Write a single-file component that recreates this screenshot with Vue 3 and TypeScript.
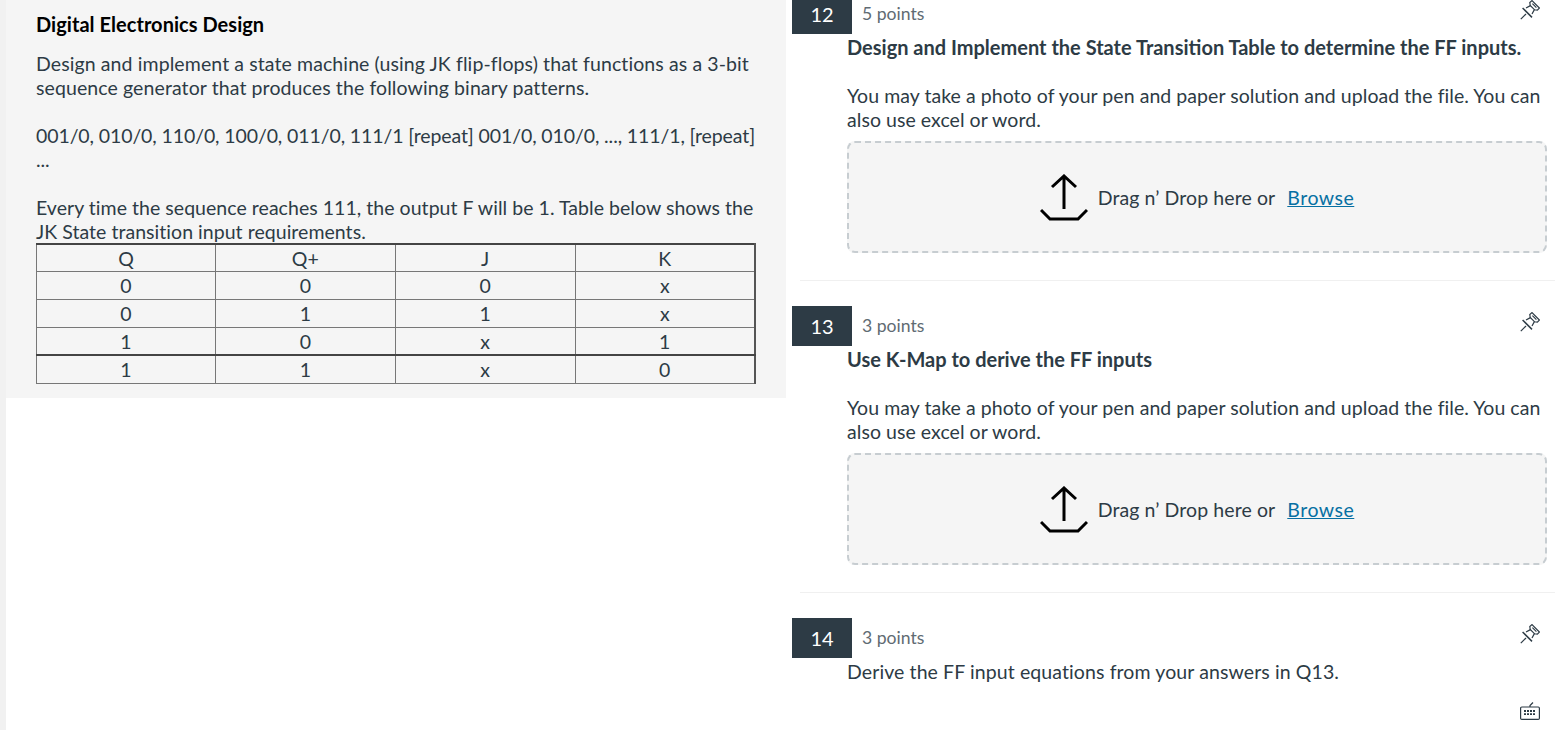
<script setup lang="ts">
interface Question {
  num: number;
  points: string;
  title: string;
  upload: boolean;
}

const rows: string[][] = [
  ['Q', 'Q+', 'J', 'K'],
  ['0', '0', '0', 'x'],
  ['0', '1', '1', 'x'],
  ['1', '0', 'x', '1'],
  ['1', '1', 'x', '0'],
];

const questions: Question[] = [
  { num: 12, points: '5 points', title: 'Design and Implement the State Transition Table to determine the FF inputs.', upload: true },
  { num: 13, points: '3 points', title: 'Use K-Map to derive the FF inputs', upload: true },
  { num: 14, points: '3 points', title: 'Derive the FF input equations from your answers in Q13.', upload: false },
];
</script>

<template>
  <div class="page">
    <div class="left">
      <div class="panel">
        <h2 class="heading">Digital Electronics Design</h2>
        <p class="line-block">Design and implement a state machine (using JK flip-flops) that functions as a 3-bit sequence generator that produces the following binary patterns.</p>
        <p class="line-block digits">001/0, 010/0, 110/0, 100/0, 011/0, 111/1 [repeat] 001/0, 010/0, ..., 111/1, [repeat] ...</p>
        <p class="line-block last">Every time the sequence reaches 111, the output F will be 1. Table below shows the JK State transition input requirements.</p>
        <table class="jk">
          <tbody>
            <tr v-for="(row, i) in rows" :key="i">
              <td v-for="(cell, j) in row" :key="j">{{ cell }}</td>
            </tr>
          </tbody>
        </table>
      </div>
    </div>

    <div class="right">
      <section v-for="q in questions" :key="q.num" class="question">
        <div class="q-head">
          <div class="q-num">{{ q.num }}</div>
          <div class="q-points">{{ q.points }}</div>
          <svg class="pin" viewBox="0 0 20 20" width="20" height="20" fill="none" stroke="#2d3b45" stroke-width="1.2">
            <path d="M0.8 19.2 L6 14" />
            <path d="M2.6 8 L12 17.4" stroke-width="1.5" />
            <path d="M6 8 L10.4 5.6 M14.4 9.6 L12 14" />
            <path d="M10.2 5.4 L9.8 2.6 L12 0.6 L19.4 8 L17.4 10.2 L14.6 9.8 Z" />
            <path d="M12.4 3.6 L16.4 7.6" />
          </svg>
        </div>
        <div class="q-body">
          <p class="q-title" :class="{ bold: q.upload }">{{ q.title }}</p>
          <template v-if="q.upload">
            <p class="q-desc">You may take a photo of your pen and paper solution and upload the file. You can also use excel or word.</p>
            <div class="drop">
              <svg class="up" viewBox="0 0 48 47" width="48" height="47" fill="none" stroke="#000" stroke-width="3">
                <path d="M24 35 V2 M12 13 L24 2 L36 13" />
                <path d="M1 36 L10 45 H38 L47 36" />
              </svg>
              <span class="drop-text">Drag n’ Drop here or</span>
              <a class="browse">Browse</a>
            </div>
          </template>
        </div>
        <div v-if="q.upload" class="sep"></div>
        <div v-else class="kbd-row">
          <svg viewBox="0 0 20 20" width="20" height="20" fill="none" stroke="#2d3b45" stroke-width="1.2">
            <path d="M10 6 V4.5 L13 1.5" />
            <rect x="0.6" y="6" width="18.8" height="12.4" rx="1.2" />
            <path d="M4 10 H16 M4 13.2 H16" stroke-width="1.8" stroke-dasharray="2 1" />
          </svg>
        </div>
      </section>
    </div>
  </div>
</template>

<style>
html,
body {
  margin: 0;
  background: #fff;
}
</style>

<style scoped>
.page {
  display: flex;
  width: 1555px;
  height: 730px;
  overflow: hidden;
  font-family: Lato, "Noto Sans", sans-serif;
  font-size: 19.5px;
  letter-spacing: 0.1px;
  line-height: 24px;
  color: #2d3b45;
}

.left {
  width: 786px;
  flex: none;
  box-sizing: border-box;
  padding-left: 6px;
  background: linear-gradient(#f1f1f1, #f1f1f1) left / 6px 100% no-repeat;
}

.panel {
  box-sizing: border-box;
  height: 398px;
  padding: 12px 30px 0;
  background: #f5f5f5;
}

.heading {
  margin: 0 0 16px;
  font-size: 20px;
  letter-spacing: 0.04px;
  line-height: 24px;
  font-weight: 700;
  color: #000;
}

.line-block {
  margin: 0 0 24px;
}

.line-block.digits {
  letter-spacing: -0.1px;
}

.line-block.last {
  margin-bottom: 0;
  letter-spacing: 0.04px;
}

.jk {
  width: 720px;
  margin-top: -1px;
  border-collapse: collapse;
  table-layout: fixed;
  border-top: 2px solid #444;
  border-right: 2px solid #555;
}

.jk td {
  box-sizing: border-box;
  height: 28px;
  padding: 1px 0 0;
  border: 1px solid #777;
  text-align: center;
  line-height: 25px;
}

.jk tr:first-child td {
  height: 27px;
  padding-top: 2px;
  line-height: 23px;
}

.jk td:first-child {
  width: 179px;
}

.jk tr:nth-child(4) td {
  border-bottom: 2px solid #444;
}

.right {
  flex: 1;
  min-width: 0;
  padding-left: 6px;
}

.question {
  height: 312px;
}

.question:first-child {
  margin-top: -6px;
}

.q-head {
  display: flex;
  align-items: center;
  height: 40px;
}

.q-num {
  width: 60px;
  height: 40px;
  background: #2d3b45;
  color: #fff;
  font-size: 20px;
  letter-spacing: 0;
  line-height: 40px;
  text-align: center;
}

.q-points {
  margin-left: 10px;
  font-size: 17.6px;
  letter-spacing: 0;
  color: #5f6b73;
}

.pin {
  margin-left: auto;
  margin-right: 15px;
  margin-bottom: 8px;
}

.q-body {
  padding-left: 55px;
}

.q-title {
  margin: 0;
  padding-top: 2px;
}

.q-title.bold {
  padding-top: 1px;
  font-size: 20px;
  letter-spacing: 0;
  font-weight: 700;
}

.q-desc {
  margin: 25px 0 9px;
  letter-spacing: 0.05px;
}

.drop {
  display: flex;
  align-items: center;
  justify-content: center;
  box-sizing: border-box;
  width: 700px;
  height: 112px;
  border: 2px dashed #c7cdd1;
  border-radius: 8px;
  background: #f5f5f5;
}

.up {
  margin-right: 10px;
}

.drop-text,
.browse {
  margin-top: 2px;
}

.browse {
  margin-left: 12px;
  letter-spacing: 0.5px;
  color: #0770a3;
  text-decoration: underline;
}

.sep {
  margin: 27px 0 0 8px;
  border-top: 1px solid #f0f0f0;
}

.kbd-row {
  display: flex;
  justify-content: flex-end;
  padding: 17px 15px 0 0;
}
</style>
